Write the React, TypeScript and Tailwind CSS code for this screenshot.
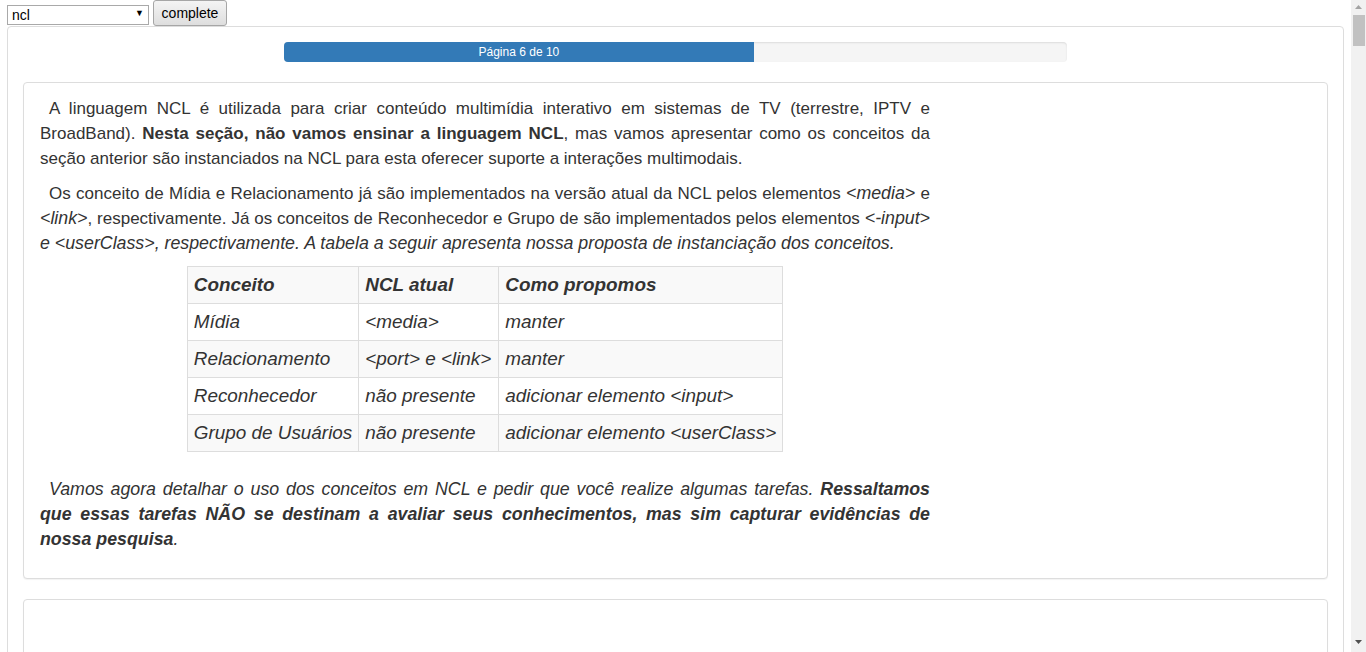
export default function App() {
  return (
    <div className="flex h-[652px] overflow-hidden bg-white font-['Liberation_Sans',Arial,sans-serif] text-[#333]">
      {/* Page */}
      <div className="min-w-0 flex-1 overflow-hidden px-[7px]">
        {/* Top bar */}
        <div className="flex h-[26px] items-center gap-[4px]">
          <div className="relative h-[20px] w-[142px]">
            <select className="h-full w-full appearance-none border border-[#a9a9a9] bg-white pl-[4px] text-[14px] leading-[18px] text-black outline-none">
              <option>ncl</option>
            </select>
            <span className="pointer-events-none absolute right-[5px] top-[4px] text-[9px] leading-[12px] text-black">▼</span>
          </div>
          <button className="h-[26px] w-[74px] rounded-[3px] border border-[#a6a6a6] bg-gradient-to-b from-[#f4f4f4] to-[#dedede] text-[14px] text-black">
            complete
          </button>
        </div>

        {/* Outer panel */}
        <div className="rounded-[4px] border border-[#ddd] p-[15px]">
          {/* Progress */}
          <div className="mx-auto flex h-[20px] w-[783px] overflow-hidden rounded-[4px] bg-[#f5f5f5] shadow-[inset_0_1px_2px_rgba(0,0,0,0.1)]">
            <div className="flex h-full w-[60%] items-center justify-center bg-[#337ab7] text-[12px] leading-[20px] text-white">
              Página 6 de 10
            </div>
          </div>

          {/* Content panel */}
          <div className="mt-[20px] rounded-[4px] border border-[#ddd] bg-white px-[16px] pb-[16px] pt-[13px] shadow-[0_1px_1px_rgba(0,0,0,0.05)]">
            <div className="w-[890px] text-[17px] leading-[25px]">
              <p className="mb-[10px] indent-[9px] text-justify">
                A linguagem NCL é utilizada para criar conteúdo multimídia interativo em sistemas de TV (terrestre, IPTV e
                BroadBand). <b>Nesta seção, não vamos ensinar a linguagem NCL</b>, mas vamos apresentar como os conceitos
                da seção anterior são instanciados na NCL para esta oferecer suporte a interações multimodais.
              </p>
              <p className="mb-[10px] indent-[9px] text-justify">
                Os conceito de Mídia e Relacionamento já são implementados na versão atual da NCL pelos elementos{" "}
                <i className="text-[17.8px]">&lt;media&gt;</i> e <i className="text-[17.8px]">&lt;link&gt;</i>,
                respectivamente. Já os conceitos de Reconhecedor e Grupo de são implementados pelos elementos{" "}
                <i className="text-[17.8px]">
                  &lt;-input&gt; e &lt;userClass&gt;, respectivamente. A tabela a seguir apresenta nossa proposta de
                  instanciação dos conceitos.
                </i>
              </p>

              <table className="mx-auto mb-[25px] border-collapse text-[18.9px] italic leading-[26px]">
                <thead>
                  <tr className="bg-[#f9f9f9]">
                    <th className="w-[170px] border border-[#ddd] px-[6px] py-[5px] text-left font-bold">Conceito</th>
                    <th className="w-[140px] border border-[#ddd] px-[6px] py-[5px] text-left font-bold">NCL atual</th>
                    <th className="w-[283px] border border-[#ddd] px-[6px] py-[5px] text-left font-bold">Como propomos</th>
                  </tr>
                </thead>
                <tbody>
                  {[
                    ["Mídia", "<media>", "manter"],
                    ["Relacionamento", "<port> e <link>", "manter"],
                    ["Reconhecedor", "não presente", "adicionar elemento <input>"],
                    ["Grupo de Usuários", "não presente", "adicionar elemento <userClass>"],
                  ].map((row, i) => (
                    <tr key={i} className={i % 2 === 1 ? "bg-[#f9f9f9]" : "bg-white"}>
                      {row.map((cell, j) => (
                        <td key={j} className="whitespace-nowrap border border-[#ddd] px-[6px] py-[5px]">
                          {cell}
                        </td>
                      ))}
                    </tr>
                  ))}
                </tbody>
              </table>

              <p className="mb-[10px] indent-[9px] text-justify text-[17.8px] italic">
                Vamos agora detalhar o uso dos conceitos em NCL e pedir que você realize algumas tarefas.{" "}
                <b>
                  Ressaltamos que essas tarefas NÃO se destinam a avaliar seus conhecimentos, mas sim capturar evidências
                  de nossa pesquisa
                </b>
                .
              </p>
            </div>
          </div>

          {/* Next panel */}
          <div className="mt-[20px] h-[400px] rounded-[4px] border border-[#ddd] bg-white shadow-[0_1px_1px_rgba(0,0,0,0.05)]"></div>
        </div>
      </div>

      {/* Scrollbar */}
      <div className="flex w-[15px] shrink-0 flex-col bg-[#f1f1f1]">
        <svg width="15" height="15" viewBox="0 0 15 15">
          <polygon points="4,9 11,9 7.5,5" fill="#a3a3a3" />
        </svg>
        <div className="ml-[2px] h-[31px] w-[12px] bg-[#c1c1c1]"></div>
        <div className="flex-1"></div>
        <svg width="15" height="15" viewBox="0 0 15 15">
          <polygon points="4,3 11,3 7.5,7" fill="#505050" />
        </svg>
      </div>
    </div>
  );
}
